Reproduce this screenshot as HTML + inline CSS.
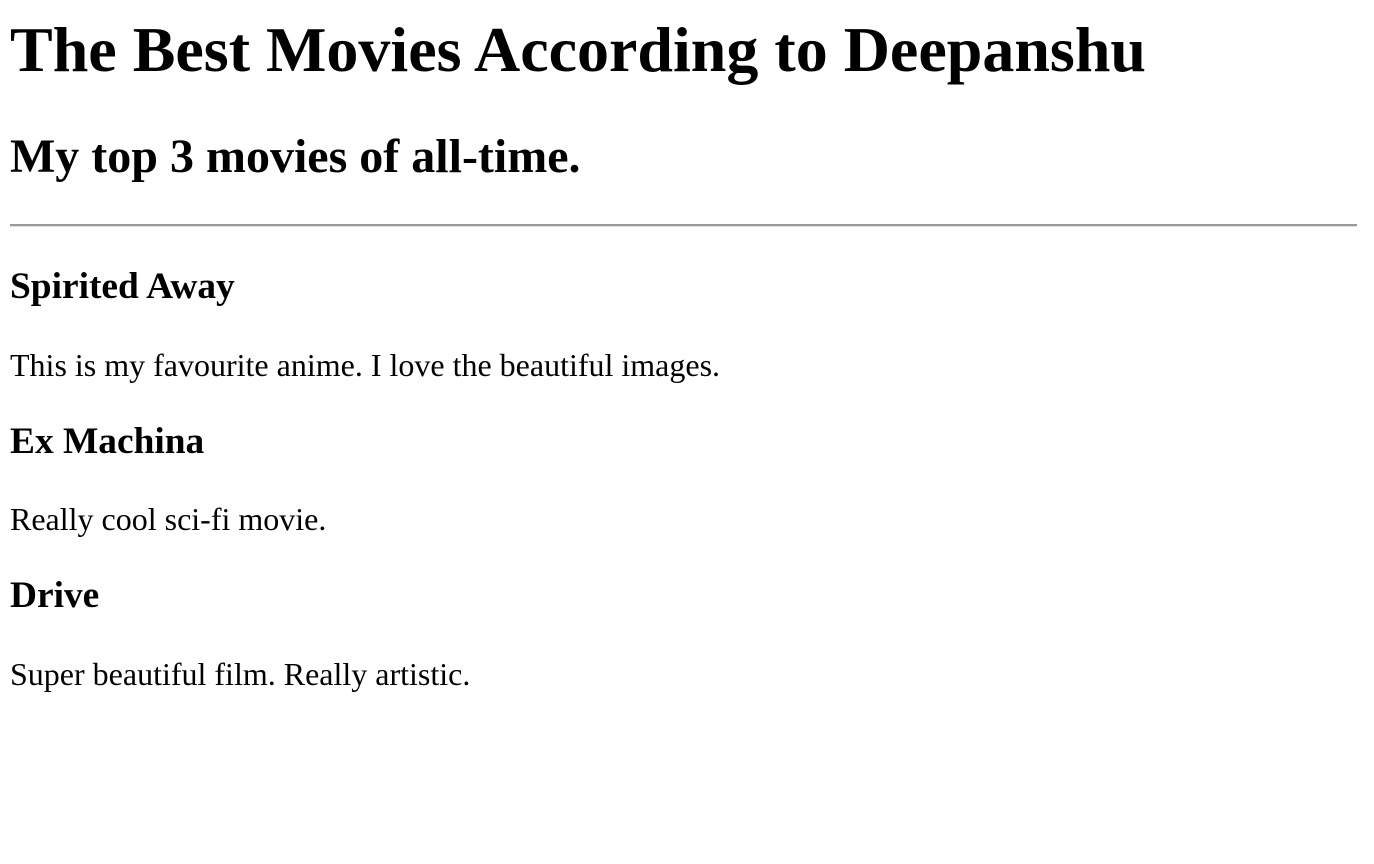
<!DOCTYPE html>
<html><head><meta charset="utf-8"><style>
html,body{margin:0;padding:0;background:#fff;}
body{padding:0 10px;font-family:"Liberation Serif",serif;color:#000;width:1347px;}
h1{font-size:64px;margin:0;padding-top:13px;line-height:73.5px;font-weight:bold;}
h2{font-size:48px;margin:42px 0 0;line-height:55px;font-weight:bold;}
hr{margin:40px 0 0;height:0;border:0;border-top:2px solid #9a9a9a;border-bottom:1px solid #e0e0e0;width:1347px;}
h3{font-size:37.4px;margin:37px 0 38px;line-height:42.5px;font-weight:bold;}
h3:first-of-type{margin-top:39px;margin-bottom:39px;}
p{font-size:32px;margin:0;line-height:36.8px;}
</style></head><body>
<h1>The Best Movies According to Deepanshu</h1>
<h2>My top 3 movies of all-time.</h2>
<hr>
<h3>Spirited Away</h3>
<p>This is my favourite anime. I love the beautiful images.</p>
<h3>Ex Machina</h3>
<p>Really cool sci-fi movie.</p>
<h3>Drive</h3>
<p>Super beautiful film. Really artistic.</p>
</body></html>
